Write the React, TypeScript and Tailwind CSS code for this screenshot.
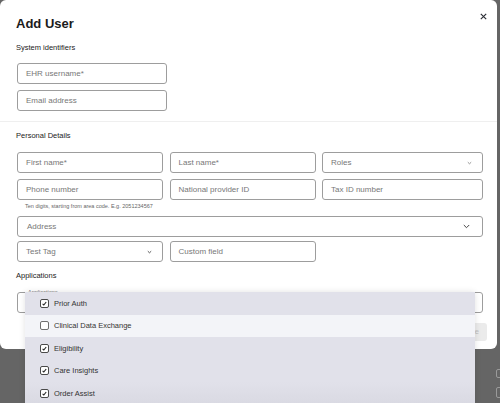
import React from "react";

type FieldProps = {
    label: string;
    chevron?: "sm" | "lg" | "dark";
    className?: string;
};

const Chevron = ({ kind }: { kind: "sm" | "lg" | "dark" }) => {
    if (kind === "lg") {
        return (
            <svg width="7" height="5" viewBox="0 0 7 5" className="shrink-0">
                <path d="M0.8 1 L3.5 3.7 L6.2 1" fill="none" stroke="#444" strokeWidth="1" />
            </svg>
        );
    }
    return (
        <svg width="5" height="4" viewBox="0 0 5 4" className="shrink-0">
            <path
                d="M0.8 1.2 L2.5 2.8 L4.2 1.2"
                fill="none"
                stroke={kind === "dark" ? "#444" : "#888"}
                strokeWidth="0.9"
            />
        </svg>
    );
};

const Field: React.FC<FieldProps> = ({ label, chevron, className = "" }) => (
    <div
        className={`flex h-[21px] items-center justify-between rounded-[3px] border border-[#9d9d9d] bg-white pl-[8px] pr-[10px] text-[8px] text-[#777] ${className}`}
    >
        <span>{label}</span>
        {chevron && <Chevron kind={chevron} />}
    </div>
);

const Checkbox = ({ checked }: { checked: boolean }) => (
    <span
        className={`flex h-[9px] w-[9px] items-center justify-center rounded-[2px] border bg-white ${
            checked ? "border-[#4a4a4a]" : "border-[#6f6f6f]"
        }`}
    >
        {checked && (
            <svg width="7" height="7" viewBox="0 0 7 7">
                <path d="M1.6 3.9 L2.8 5 L5.2 2" fill="none" stroke="#222" strokeWidth="1.1" />
            </svg>
        )}
    </span>
);

const applications = [
    { name: "Prior Auth", checked: true },
    { name: "Clinical Data Exchange", checked: false },
    { name: "Eligibility", checked: true },
    { name: "Care Insights", checked: true },
    { name: "Order Assist", checked: true }
];

export default function App() {
    return (
        <div
            className="relative h-[403px] w-[500px] overflow-hidden bg-[#656565]"
            style={{ fontFamily: '"Liberation Sans", Arial, sans-serif' }}
        >
            {/* page behind the backdrop */}
            <div className="absolute left-[496px] top-[369px] h-[9px] w-[9px] rounded-[2px] border border-[#9a9a9a]" />
            <div className="absolute left-[496px] top-[387px] h-[11px] w-[9px] rounded-[2px] border border-[#9a9a9a]" />

            <div className="absolute left-0 top-0 h-[349px] w-[497px] rounded-[6px] bg-white">
                <div className="flex items-start justify-between pl-[16px] pr-[10px] pt-[16px]">
                    <h1 className="text-[13px] font-bold leading-[16px] text-[#1b1b1b]">Add User</h1>
                    <button className="mt-[-3px]">
                        <svg width="7" height="7" viewBox="0 0 7 7">
                            <path d="M0.8 0.8 L6.2 6.2 M6.2 0.8 L0.8 6.2" stroke="#2c2f36" strokeWidth="1.15" />
                        </svg>
                    </button>
                </div>

                <div className="pl-[16px] pr-[14px]">
                    <h2 className="mt-[11px] text-[7.5px] font-medium leading-[10px] text-[#222]">
                        System identifiers
                    </h2>
                    <div className="ml-[1px] mt-[10px] flex w-[150px] flex-col gap-[6px]">
                        <Field label="EHR username*" />
                        <Field label="Email address" />
                    </div>
                </div>

                <div className="mt-[10px] border-t border-[#efefef]" />

                <div className="pl-[16px] pr-[14px]">
                    <h2 className="mt-[9px] text-[7.5px] font-medium leading-[10px] text-[#222]">
                        Personal Details
                    </h2>
                    <div className="ml-[1px] mt-[11px] grid grid-cols-[146px_146px_161px] gap-x-[6.5px] gap-y-[6px]">
                        <Field label="First name*" />
                        <Field label="Last name*" />
                        <Field label="Roles" chevron="sm" />
                        <Field label="Phone number" />
                        <Field label="National provider ID" />
                        <Field label="Tax ID number" />
                    </div>
                    <p className="ml-[9px] mt-[3px] text-[5.5px] leading-[7px] text-[#666]">
                        Ten digits, starting from area code. E.g. 2051234567
                    </p>
                    <Field label="Address" chevron="lg" className="ml-[1px] mt-[6px] pl-[9px] pr-[12px]" />
                    <div className="ml-[1px] mt-[4px] flex gap-[6.5px]">
                        <Field label="Test Tag" chevron="dark" className="w-[146px] text-[#666]" />
                        <Field label="Custom field" className="w-[146px]" />
                    </div>

                    <h2 className="mt-[9px] text-[7.5px] font-medium leading-[10px] text-[#222]">
                        Applications
                    </h2>
                    <div className="relative ml-[1px] mt-[11px] h-[21px] rounded-[3px] border border-[#9d9d9d] bg-white">
                        <span className="absolute left-[8px] top-[-4px] bg-white px-[2px] text-[5.5px] leading-[7px] text-[#777]">
                            Applications
                        </span>
                    </div>
                    <div className="mt-[10px] flex justify-end">
                        <button className="mr-[-4px] h-[18px] rounded-[3px] bg-[#ebebeb] px-[8px] text-[7.5px] text-[#bdbdbd]">
                            Save
                        </button>
                    </div>
                </div>
            </div>

            {/* open multi-select menu */}
            <ul className="absolute left-[25px] top-[292px] w-[450px] shadow-[0_0_6px_rgba(0,0,0,0.12)]">
                {applications.map((app, i) => (
                    <li
                        key={app.name}
                        className={`flex h-[22.5px] items-center gap-[5.5px] pl-[14.5px] text-[7.5px] text-[#333] ${
                            app.checked ? "bg-[#e1e1ea]" : "bg-[#f3f4f8]"
                        } ${i === applications.length - 1 ? "bg-gradient-to-b from-[#e1e1ea] to-[#d9d9e2]" : ""}`}
                    >
                        <Checkbox checked={app.checked} />
                        <span>{app.name}</span>
                    </li>
                ))}
            </ul>
        </div>
    );
}
